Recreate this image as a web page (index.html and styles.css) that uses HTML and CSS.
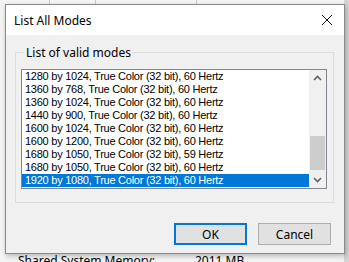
FILE: index.html
```html
<!DOCTYPE html>
<html lang="en">
<head>
    <meta charset="UTF-8">
    <title>List All Modes</title>
    <link rel="stylesheet" href="styles.css">
</head>
<body>
    <div class="backdrop">
        <div class="tabs">
            <span class="tab t1"></span>
            <span class="tab t2"></span>
            <span class="tab t3"></span>
        </div>
        <div class="info-row">
            <span class="info-label">Shared System Memory:</span>
            <span class="info-value">2011 MB</span>
        </div>
    </div>

    <div class="dialog">
        <div class="titlebar">
            <span class="title">List All Modes</span>
            <svg class="close" width="12" height="12" viewBox="0 0 12 12">
                <path d="M1 1 L11 11 M11 1 L1 11" stroke="#111" stroke-width="1" fill="none"/>
            </svg>
        </div>
        <div class="body">
            <fieldset class="group">
                <legend>List of valid modes</legend>
                <div class="listbox">
                    <ul class="modes">
                        <li>1280 by 1024, True Color (32 bit), 60 Hertz</li>
                        <li>1360 by 768, True Color (32 bit), 60 Hertz</li>
                        <li>1360 by 1024, True Color (32 bit), 60 Hertz</li>
                        <li>1440 by 900, True Color (32 bit), 60 Hertz</li>
                        <li>1600 by 1024, True Color (32 bit), 60 Hertz</li>
                        <li>1600 by 1200, True Color (32 bit), 60 Hertz</li>
                        <li>1680 by 1050, True Color (32 bit), 59 Hertz</li>
                        <li>1680 by 1050, True Color (32 bit), 60 Hertz</li>
                        <li class="selected">1920 by 1080, True Color (32 bit), 60 Hertz</li>
                    </ul>
                    <div class="scrollbar">
                        <svg class="arrow" width="17" height="17" viewBox="0 0 17 17">
                            <path d="M5 10 L8.5 6.5 L12 10" stroke="#606060" stroke-width="1.6" fill="none"/>
                        </svg>
                        <div class="track">
                            <div class="thumb"></div>
                        </div>
                        <svg class="arrow" width="17" height="17" viewBox="0 0 17 17">
                            <path d="M5 7 L8.5 10.5 L12 7" stroke="#606060" stroke-width="1.6" fill="none"/>
                        </svg>
                    </div>
                </div>
            </fieldset>
            <div class="buttons">
                <button class="btn default">OK</button>
                <button class="btn">Cancel</button>
            </div>
        </div>
    </div>
</body>
</html>
```

FILE: styles.css
```css
body {
    margin: 0;
    width: 349px;
    height: 262px;
    overflow: hidden;
    background-color: #f0f0f0;
    font-family: "Noto Sans", "Liberation Sans", sans-serif;
    position: relative;
}
.backdrop {
    height: 262px;
    background-color: #f4f4f4;
    border-right: 5px solid #d4d4d4;
    box-sizing: border-box;
}
.tabs {
    height: 6px;
    position: relative;
}
.tab {
    position: absolute;
    top: 0;
    width: 1px;
    height: 6px;
    background-color: #c8c8c8;
}
.t1 { left: 49px; }
.t2 { left: 95px; }
.t3 { left: 196px; }
.info-row {
    margin-top: 248px;
    padding-left: 18px;
    font-size: 12px;
    line-height: 14px;
    color: #000;
    display: flex;
}
.info-label {
    width: 177px;
}
.dialog {
    position: absolute;
    left: 5px;
    top: 4px;
    width: 338px;
    height: 248px;
    border: 1px solid #8a8a8a;
    background-color: #f0f0f0;
    box-shadow: 1px 2px 5px rgba(0, 0, 0, 0.25);
    display: flex;
    flex-direction: column;
}
.titlebar {
    height: 30px;
    background-color: #fff;
    display: flex;
    align-items: center;
    justify-content: space-between;
    padding: 0 11px 0 8px;
    flex-shrink: 0;
}
.title {
    font-size: 12px;
    color: #000;
}
.close {
    display: block;
}
.body {
    flex: 1;
    padding: 11px 10px 0 9px;
}
.group {
    margin: 0;
    height: 157px;
    border: 1px solid #dcdcdc;
    padding: 10px 6px 0 5px;
    box-sizing: border-box;
}
.group legend {
    font-size: 12px;
    padding: 0 2px;
    margin-left: 3px;
    line-height: 13px;
}
.listbox {
    height: 120px;
    border: 1px solid #828790;
    background-color: #fff;
    display: flex;
    box-sizing: border-box;
}
.modes {
    list-style: none;
    margin: 0;
    padding: 0;
    flex: 1;
    font-family: "Liberation Sans", Arial, sans-serif;
    font-size: 11px;
    letter-spacing: -0.25px;
}
.modes li {
    height: 13px;
    line-height: 13px;
    padding-left: 3px;
    white-space: nowrap;
}
.modes li.selected {
    background-color: #0078d7;
    color: #fff;
}
.scrollbar {
    width: 17px;
    background-color: #f0f0f0;
    display: flex;
    flex-direction: column;
}
.arrow {
    display: block;
}
.track {
    flex: 1;
    display: flex;
    flex-direction: column;
    justify-content: flex-end;
}
.thumb {
    height: 34px;
    margin: 0 1px 1px;
    background-color: #cdcdcd;
}
.buttons {
    display: flex;
    justify-content: flex-end;
    gap: 11px;
    margin-top: 20px;
    padding-right: 3px;
}
.btn {
    width: 73px;
    height: 22px;
    font-family: "Noto Sans", "Liberation Sans", sans-serif;
    font-size: 12px;
    background-color: #e1e1e1;
    border: 1px solid #adadad;
    padding: 0;
    color: #000;
}
.btn.default {
    border: 2px solid #0078d7;
}
```
